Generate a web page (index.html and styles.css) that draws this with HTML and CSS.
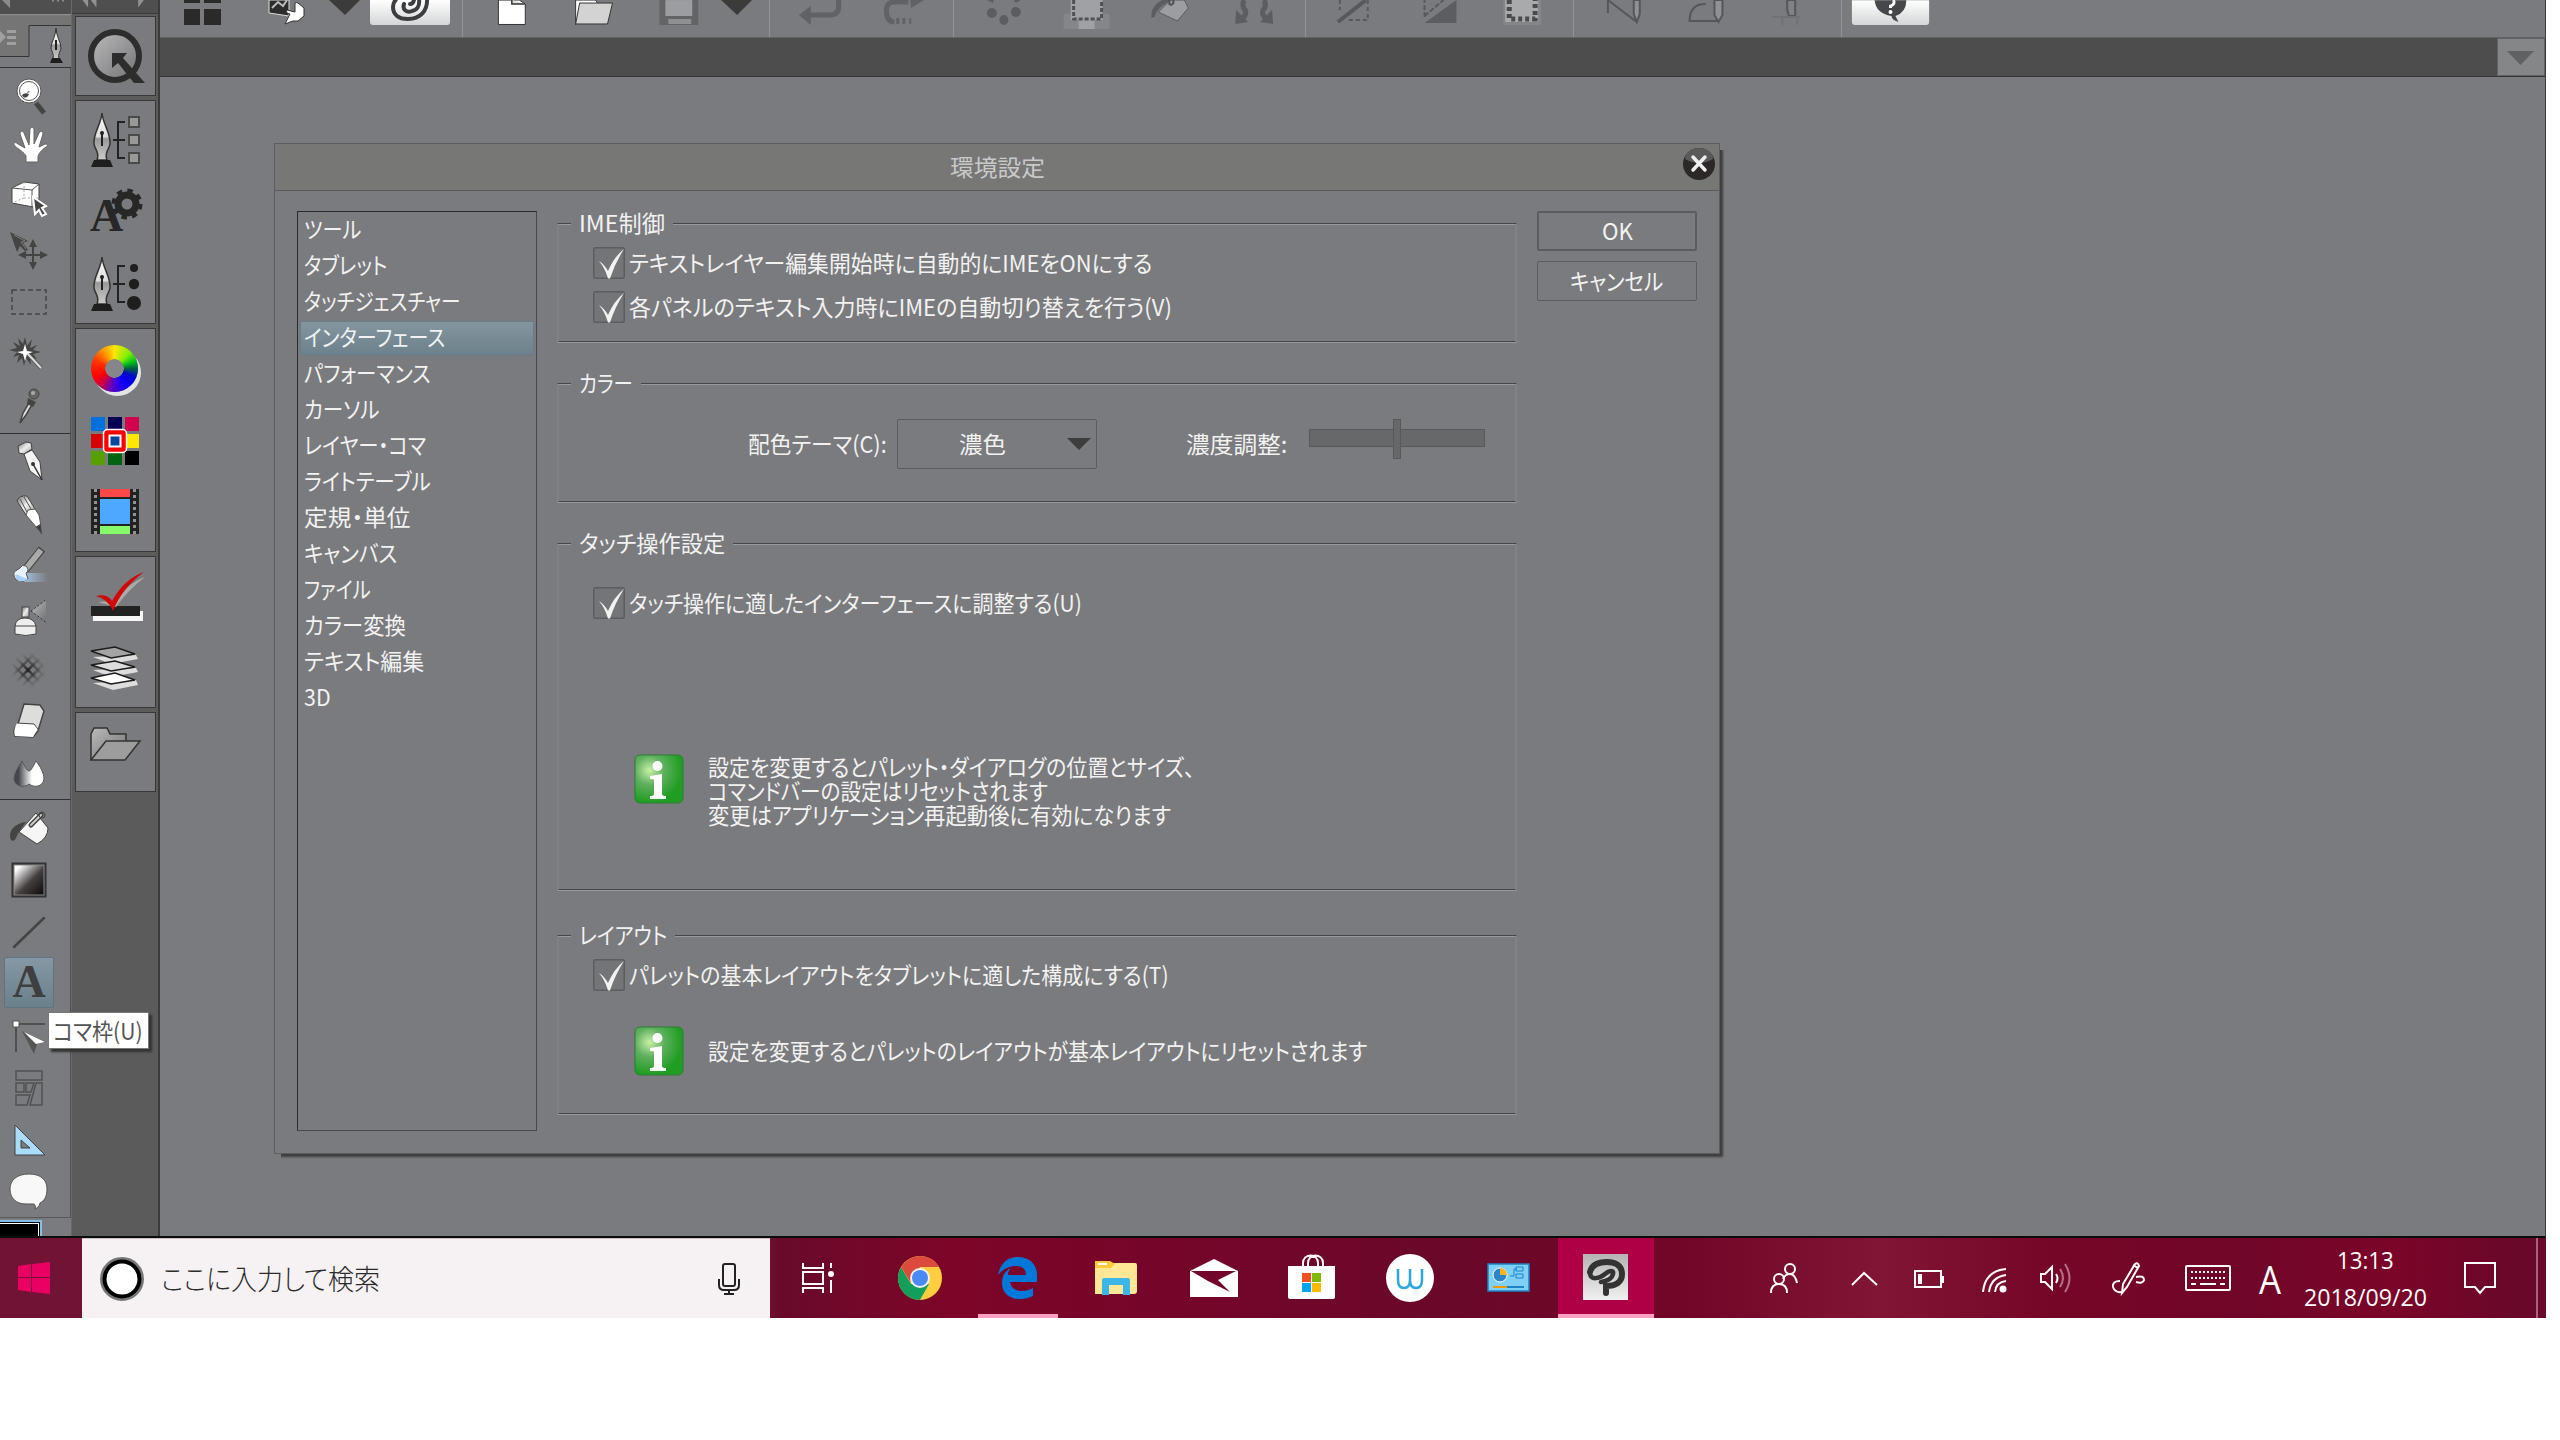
FILE: index.html
```html
<!DOCTYPE html>
<html lang="ja">
<head>
  <meta charset="UTF-8" />
  <title>環境設定</title>
  <link rel="stylesheet" href="styles.css">
</head>
<body>
<svg class="defs">
  <defs>
    <linearGradient id="metal" x1="0" y1="0" x2="1" y2="1"><stop offset="0" stop-color="#777"/><stop offset=".5" stop-color="#eee"/><stop offset="1" stop-color="#999"/></linearGradient>
    <linearGradient id="nib" x1="0" y1="0" x2="0" y2="1"><stop offset="0" stop-color="#fff"/><stop offset=".5" stop-color="#ddd"/><stop offset=".55" stop-color="#999"/><stop offset="1" stop-color="#ccc"/></linearGradient>
    <linearGradient id="grayfade" x1="0" y1="0" x2="1" y2="1"><stop offset="0" stop-color="#bbb"/><stop offset="1" stop-color="#717275"/></linearGradient>
    <linearGradient id="bw" x1="0" y1="0" x2="1" y2="1"><stop offset=".1" stop-color="#fff"/><stop offset=".55" stop-color="#433f3e"/><stop offset="1" stop-color="#0f0a08"/></linearGradient>
    <linearGradient id="drop" x1="0" y1="0" x2="1" y2="0"><stop offset=".15" stop-color="#42474c"/><stop offset=".6" stop-color="#fff"/></linearGradient>
    <linearGradient id="water" x1="0" y1="0" x2="1" y2="0"><stop offset="0" stop-color="#a9d0f5"/><stop offset="1" stop-color="#a9d0f5" stop-opacity="0"/></linearGradient>
    <linearGradient id="btnface" x1="0" y1="0" x2="0" y2="1"><stop offset="0" stop-color="#fff"/><stop offset="1" stop-color="#d3d6d7"/></linearGradient>
    <linearGradient id="appface" x1="0" y1="0" x2="0" y2="1"><stop offset="0" stop-color="#b4b4b4"/><stop offset="1" stop-color="#f0f0f0"/></linearGradient>
    <radialGradient id="green" cx=".3" cy=".32" r=".75"><stop offset="0" stop-color="#c8f0a8"/><stop offset=".4" stop-color="#5fb05f"/><stop offset=".9" stop-color="#1f9e22"/></radialGradient>
    <radialGradient id="mesh" gradientUnits="userSpaceOnUse" cx="28" cy="669" r="18"><stop offset="0" stop-color="#222"/><stop offset="1" stop-color="#555" stop-opacity="0"/></radialGradient>
    <g id="bignib">
      <path d="M102 113c-1 12-9 20-8 31 1 6 6 8 3 16h10c-3-8 2-10 3-16 1-11-7-19-8-31z" fill="url(#nib)" stroke="#333" stroke-width="1.5"/>
      <path d="M102 133v13" stroke="#222" stroke-width="2"/><circle cx="102" cy="133" r="2" fill="#222"/>
      <path d="M94 160h16l3 7H91z" fill="#1e1e1e"/>
      <path d="M125 122h-7v36h7M113 140h12" fill="none" stroke="#222" stroke-width="2"/>
    </g>
    <g id="check">
      <rect x=".75" y=".75" width="30.5" height="30.5" rx="1.5" fill="#747578" stroke="#5c5d5f" stroke-width="1.5"/>
      <path d="M6 14q5 3 9 10Q21 10 31 2 22 16 17 31.500h-2Q12 21 6 14z" fill="#f2f2f2"/>
    </g>
    <g id="info">
      <rect x="1" y="1" width="48" height="48" rx="5" fill="url(#green)" stroke="#2f7d35"/>
      <circle cx="23.500" cy="12" r="5" fill="#fff"/>
      <path d="M16 22l12-2v20q0 2 4 2v3H16v-3q4 0 4-2V26q0-1-4-1z" fill="#fff"/>
    </g>
  </defs>
</svg>

<div class="screen">
  <div class="app">
    <!-- tool palette -->
    <div class="tools">
      <div class="tools-top">
        <svg viewBox="0 0 71 68" width="71" height="68">
          <rect width="71" height="14" fill="#4f4f50"/>
          <path d="M2 0l8 8V0z" fill="#8b8b8d"/>
          <path d="M52 0h2M57 0h2M62 0h2" stroke="#8b8b8d" stroke-width="3"/>
          <path d="M0 14.500h71" stroke="#8c8d8f"/>
          <path d="M0 16h71v9H29v31H0z" fill="#757575"/>
          <path d="M0 56.500h29V25.500h42" fill="none" stroke="#353535"/>
          <path d="M0 31l6 6-6 6z" fill="#a0a0a0"/><path d="M7 31.500h9M7 37.500h9M7 43.500h9" stroke="#a0a0a0" stroke-width="3"/>
          <path d="M56 28c0 8-5 14-5 20 1 5 3 5 2 11h6c-1-6 1-6 2-11 0-6-5-12-5-20z" fill="url(#nib)" stroke="#333"/>
          <path d="M56 40v10" stroke="#222" stroke-width="2"/><path d="M50 63l2-5h8l3 5z" fill="#1e1e1e"/>
          <path d="M0 67.500h71" stroke="#343435"/>
        </svg>
      </div>
      <div class="toolset">
        <svg class="tool" viewBox="0 68 72 52"><path d="M36 103l8 10" stroke="#444" stroke-width="5"/><circle cx="29" cy="91" r="12" fill="#fff" stroke="#555"/><circle cx="29" cy="91" r="9.500" fill="none" stroke="#555"/><path d="M22 95q3-3 7-1-2 5-6 3zM27 93q1-3 3-1z" fill="#444"/></svg>
        <svg class="tool" viewBox="0 120 72 52"><path d="M26 162v-6c-2-4-7-6-12-11-1-3 2-3 4-1l7 4-5-14c0-3 3-4 4-1l5 12 1-16c1-2 3-2 4 0v15l5-11c2-3 4-1 4 1l-4 13 6-3c3 0 3 2 1 3-5 3-7 7-8 9v6z" fill="#fff" stroke="#666"/></svg>
        <svg class="tool" viewBox="0 172 72 52"><path d="M12 188l12-6 15 2v15l-6 8-21-4z" fill="#fff" stroke="#444"/><path d="M12 188l20 2v17M32 190l7-6" fill="none" stroke="#555"/><path d="M24 182v16l-12 5M24 198h14" fill="none" stroke="#aaa" stroke-dasharray="2 2"/><path d="M33 197l13 9-4 2 4 6-4 2-3-6-4 4z" fill="#444" stroke="#fff" stroke-width="2"/></svg>
        <svg class="tool" viewBox="0 224 72 52"><path d="M10 232l18 9-5 2 5 7-3 1-5-5-3 6z" fill="#444"/><path d="M14 235l11 6-4 1 5 7" stroke="#7a7b7e" fill="none"/><path d="M33 245v20M23 255h20" stroke="#444" stroke-width="2"/><path d="M33 239l4 8h-8zM33 270l4-8h-8zM18 255l8-4v8zM48 255l-8-4v8z" fill="#444"/></svg>
        <svg class="tool" viewBox="0 276 72 52"><rect x="12" y="290" width="34" height="24" fill="none" stroke="#454545" stroke-width="1.500" stroke-dasharray="5 3"/></svg>
        <svg class="tool" viewBox="0 328 72 52"><path d="M25 337l2 9 5-7-2 9 7-3-4 5 8 2-8 2 4 5-7-3 1 9-5-7-2 8-2-8-5 5 2-8-6 2 4-5-8-2 8-2-4-6 7 4-2-8 5 6z" fill="#454545"/><path d="M27 353l14 15" stroke="#555" stroke-width="4"/><path d="M27 353l14 15" stroke="#ddd" stroke-width="2"/><path d="M25 344l2 7 6 1-6 2-2 7-2-7-6-2 6-1z" fill="#fff"/></svg>
        <svg class="tool" viewBox="0 380 72 52"><path d="M20 423l3-10 7-12 3 2-7 12z" fill="#ddd" stroke="#444" stroke-width="1.500"/><path d="M28 398l8 4-3 5-6-3z" fill="#444"/><circle cx="34" cy="394" r="5" fill="#666" stroke="#444"/><circle cx="33" cy="393" r="2" fill="#aaa"/></svg>
      </div>
      <div class="toolset">
        <svg class="tool" viewBox="0 433 72 52"><path d="M18 445l8-4 5 1 1 6-8 5-5-1z" fill="url(#metal)" stroke="#444"/><path d="M24 453l8-4 8 12 2 18-12-9z" fill="#f4f4f4" stroke="#444"/><path d="M42 479l-9-16" stroke="#333" stroke-width="1.500"/><circle cx="33" cy="463" r="2" fill="#333"/></svg>
        <svg class="tool" viewBox="0 485 72 52"><path d="M17 500q2-6 10-5l8 13-9 6z" fill="url(#metal)" stroke="#444"/><path d="M26 514l2-5 7-1 4 6 2 11-4 2z" fill="#fff" stroke="#555"/><path d="M20 498l7 13M24 496l7 12" stroke="#555"/><path d="M41 531l-4-5 3-2z" fill="#333" stroke="#444" stroke-width="1.500"/></svg>
        <svg class="tool" viewBox="0 537 72 52"><path d="M22 572h26v9H18z" fill="url(#water)"/><path d="M25 569l17-21" stroke="#444" stroke-width="8"/><path d="M25 569l16-20" stroke="#aaa" stroke-width="6"/><path d="M20 567q2-4 6-2 4 4 0 7l2 6q-4 4-10 2-5-3-4-9z" fill="#e7f3ff" stroke="#555"/><path d="M15 574q3-1 5 1l8 3q-4 4-11 1z" fill="#a9d0f5"/></svg>
        <svg class="tool" viewBox="0 589 72 52"><path d="M31 610l15-11v22z" fill="url(#grayfade)"/><path d="M31 610l16-12M31 610l16 12" stroke="#333" stroke-dasharray="2 2"/><rect x="22" y="606" width="7" height="10" fill="url(#metal)" stroke="#444"/><path d="M15 625q1-8 10-8 9 0 11 8v8q-10 3-21 0z" fill="#eee" stroke="#444"/><path d="M15 625h21" stroke="#444"/></svg>
        <svg class="tool" viewBox="0 641 72 52"><g stroke="url(#mesh)" stroke-width="2.500"><path d="M12 663l22 22M14 655l28 28M21 652l24 24M28 650l18 18"/><path d="M12 675l22-22M14 683l28-28M21 686l24-24M28 688l18-18"/></g></svg>
        <svg class="tool" viewBox="0 693 72 52"><path d="M24 703l16 1 4 6-6 20-5 6-18-1q-3-6 3-12z" fill="#ddd" stroke="#444" stroke-width="1.500"/><path d="M17 722l17 1 4 4-5 9-18-1q-2-6 2-13z" fill="#fff"/><path d="M17 722l17 1 4 5" fill="none" stroke="#444"/></svg>
        <svg class="tool" viewBox="0 745 72 52"><path d="M22 760q-8 12-8 18c1 8 11 9 15 5 5 4 14 3 15-5 0-6-4-13-8-18-2 4-5 10-7 10s-5-6-7-10z" fill="url(#drop)" stroke="#555"/></svg>
      </div>
      <div class="toolset last">
        <svg class="tool" viewBox="0 801 72 52"><path d="M19 832l17-19 12 15q0 10-11 16z" fill="#f6f6f6" stroke="#444"/><path d="M25 822q-14 3-15 13 0 8 5 5 3-8 11-18z" fill="#444"/><path d="M31 825l10-10" stroke="#444" stroke-width="5" stroke-linecap="round"/><path d="M31 825l10-10" stroke="#ccc" stroke-width="2" stroke-linecap="round"/><circle cx="42" cy="815" r="3" fill="none" stroke="#444"/></svg>
        <svg class="tool" viewBox="0 853 72 52"><rect x="12.500" y="863.500" width="33" height="33" fill="#888" stroke="#333" stroke-width="2"/><rect x="14.500" y="865.500" width="29" height="29" fill="url(#bw)"/></svg>
        <svg class="tool" viewBox="0 905 72 52"><path d="M14 947l30-29" stroke="#444" stroke-width="2.500" stroke-linecap="round"/></svg>
        <div class="tool"><div class="picked">A</div></div>
        <svg class="tool" viewBox="0 1009 72 52"><path d="M16 1024h29M16 1024v28" stroke="#505050" stroke-width="2"/><rect x="13" y="1021" width="6" height="6" fill="#fff" stroke="#555"/><path d="M22 1031l24 11-9 2-3 10z" fill="#555"/><path d="M24 1032l21 10-9 2z" fill="#fff"/></svg>
        <svg class="tool" viewBox="0 1061 72 52"><g fill="none" stroke="#505153" stroke-width="1.500"><path d="M16 1071h26v9H16zM16 1083h8v9h-8zM26 1083h8l-3 9h-5zM16 1095h14l-3 10H16zM36 1083h6v22H30z"/></g></svg>
        <svg class="tool" viewBox="0 1113 72 52"><path d="M15 1125v30h30zM21 1140l9 8h-9z" fill="#a8dcfa" fill-rule="evenodd" stroke="#444"/></svg>
        <svg class="tool" viewBox="0 1165 72 52"><path d="M29 1174c12 0 18 6 18 15 0 8-3 12-7 14 0 3-3 5-5 6 1-3 0-4-1-5h-8c-10 0-16-6-16-15s7-15 19-15z" fill="#f8f8f8" stroke="#555"/></svg>
      </div>
      <div class="swatch"></div>
    </div>

    <!-- palette dock -->
    <div class="dock">
      <svg class="dock-top" viewBox="72 0 86 14" width="86" height="14"><path d="M80 0h6v8zM89 0h6v8zM140 0h6l-6 8z" fill="#929294"/></svg>
      <div class="dockbox">
        <svg viewBox="76 17 79 79" width="79" height="79"><circle cx="115" cy="56" r="24" fill="url(#grayfade)" stroke="#2d2d2e" stroke-width="6"/><path d="M112 53h15l-4 5 22 25h-11l-16-20-6 5z" fill="#2d2d2e"/></svg>
      </div>
      <div class="dockbox">
        <svg viewBox="76 101 79 76" width="79" height="76"><use href="#bignib"/><g fill="#999" stroke="#4a4a4a" stroke-width="2"><path d="M129 117h10v10h-10zM129 135h10v10h-10zM129 153h10v10h-10z"/></g></svg>
        <svg viewBox="76 177 79 70" width="79" height="70"><text x="90" y="231" class="glyph-a">A</text><circle cx="127" cy="204" r="9" fill="none" stroke="#272727" stroke-width="7"/><circle cx="127" cy="204" r="13" fill="none" stroke="#272727" stroke-width="5" stroke-dasharray="5.200 5"/></svg>
        <svg viewBox="76 247 79 76" width="79" height="76"><g transform="translate(0 144)"><use href="#bignib"/></g><circle cx="134" cy="268" r="4" fill="#1e1e1e"/><circle cx="134" cy="284" r="5.200" fill="#1e1e1e"/><circle cx="134" cy="303" r="7" fill="#1e1e1e"/></svg>
      </div>
      <div class="dockbox">
        <div class="wheel-cell"><div class="wheel"></div></div>
        <svg viewBox="76 405 79 72" width="79" height="72">
          <path d="M91 417h14v14H91z" fill="#0070df"/><path d="M108 417h14v14h-14z" fill="#000055"/><path d="M125 417h14v14h-14z" fill="#d4004c"/>
          <path d="M91 434h14v14H91z" fill="#d90000"/><path d="M125 434h14v14h-14z" fill="#ffe800"/>
          <path d="M91 451h14v14H91z" fill="#57a000"/><path d="M108 451h14v14h-14z" fill="#006410"/><path d="M125 451h14v14h-14z" fill="#000"/>
          <rect x="103.500" y="429.500" width="23" height="23" rx="4" fill="#f00" stroke="#fff" stroke-width="1.500"/><rect x="109.500" y="435.500" width="11" height="11" fill="#0a48a0" stroke="#fff" stroke-width="2"/>
        </svg>
        <svg viewBox="76 477 79 74" width="79" height="74"><path d="M91 489h48v45H91z" fill="#222"/><path d="M100 489h30v8h-30z" fill="#ff4747"/><path d="M100 499h30v25h-30z" fill="#4fa8ff"/><path d="M100 526h30v8h-30z" fill="#86fa6a"/><path d="M95.500 489v45M134.500 489v45" stroke="#929294" stroke-width="3" stroke-dasharray="3"/></svg>
      </div>
      <div class="dockbox">
        <svg viewBox="76 557 79 76" width="79" height="76"><path d="M93 611h50v10H93z" fill="#f6f6f6"/><path d="M91 606h49v10H91z" fill="#222"/><path d="M98 602q12-2 15 4 12-22 32-29-17 13-29 30z" fill="#aaa"/><path d="M96 596q11-3 16 5 12-22 32-29-22 16-31 39-5-12-17-15z" fill="#d20808"/></svg>
        <svg viewBox="76 633 79 74" width="79" height="74"><path d="M93 657l18 7 27-5-2-4zM93 670l18 7 27-5-2-4zM93 683l20 7 25-5-2-5z" fill="#ddd"/><g stroke="#1c1c1c" stroke-width="1.500"><path d="M91 651l24-4 20 7-24 4z" fill="#a4a4a4"/><path d="M91 665l24-4 20 6-24 4z" fill="#ddd"/><path d="M91 678l24-5 20 7-24 4z" fill="#fff"/></g></svg>
      </div>
      <div class="dockbox">
        <svg viewBox="76 713 79 79" width="79" height="79"><path d="M91 760v-26l3-6h13l3 6h16v8" fill="url(#grayfade)" stroke="#333" stroke-width="1.500"/><path d="M91 760l15-19h34l-15 19z" fill="#9d9d9d" stroke="#333" stroke-width="1.500"/></svg>
      </div>
    </div>

    <div class="main">
      <!-- command bar -->
      <div class="cmdbar">
        <svg viewBox="160 0 302 37" width="302" height="37">
          <path d="M184 0h16v3h-16zM204 0h17v3h-17zM184 9h16v16h-16zM204 9h17v16h-17z" fill="#2a2a2a"/>
          <path d="M269 0v13l20 3V0z" fill="#2c2c2c" stroke="#ddd"/><path d="M272 8l6-6 5 4 4-6" stroke="#bbb" fill="none" stroke-width="2"/>
          <path d="M285 24l5-10q-5-1-3-4l8 2V3q2-1 3 0l6 5v8l-6 5h-5z" fill="#fff" stroke="#333"/>
          <path d="M329 0h31l-15 15z" fill="#3b3b3c"/>
          <path d="M370 0h80v22q0 3-3 3h-74q-3 0-3-3z" fill="url(#btnface)"/>
          <path d="M427-2c1 13-7 21-19 21-10 0-15-5-15-12 0-4 2-7 5-10M404 4c-2 6 3 9 8 7 5-1 8-5 7-12M410 4q3 0 4-4" fill="none" stroke="#3d3e42" stroke-width="4" stroke-linecap="round"/>
        </svg>
        <svg viewBox="462 0 307 37" width="307" height="37">
          <path d="M497.500 0v24.500h27V4l-6-4z" fill="#fff" stroke="#333"/><path d="M511 0v4h13" stroke="#333" fill="#ddd" stroke-width="1.500"/>
          <path d="M575 25V0h20l2 3" fill="#fff" stroke="#333"/><path d="M579 3h33l-5 21h-32z" fill="#d3d3d4" stroke="#333"/>
          <path d="M659 0h39v25h-39z" fill="#636466"/><path d="M665 0h27v16h-27z" fill="#9c9da0"/><path d="M668 19h23v5h-23z" fill="#8f9092"/>
          <path d="M721 0h31l-15 15z" fill="#3b3b3c"/>
        </svg>
        <svg viewBox="769 0 184 37" width="184" height="37" fill="none" stroke="#616265">
          <path d="M838 0v7q0 8-9 8h-20" stroke-width="5"/><path d="M798 15l12-9v19z" fill="#616265" stroke="none"/>
          <path d="M908 2h-14q-8 0-8 8 0 12 8 12" stroke-width="5"/><path d="M910 0h14l-13 8zM896 18h3v6h-3zM902 18h3v6h-3zM909 18h2v6h-2z" fill="#616265" stroke="none"/>
        </svg>
        <svg viewBox="953 0 352 37" width="352" height="37" fill="#5c5d60">
          <ellipse cx="991" cy="13" rx="5" ry="5"/><ellipse cx="1003" cy="20" rx="4.500" ry="5"/><ellipse cx="1015" cy="12" rx="5" ry="5"/><path d="M986 0h7l-1 3zM1013 0h7l-5 3z"/>
          <path d="M1063 14h46v15h-46z" fill="#858689"/><path d="M1070 0h32v20h-32zM1078 20h16v9h-16z" fill="#a0a1a4"/><path d="M1073 0v19h28V0" fill="none" stroke="#505154" stroke-width="3" stroke-dasharray="4 2"/>
          <path d="M1158 12l12-12h14l4 8-11 13z" fill="#9c9da0" stroke="#5c5d60"/><path d="M1151 18q-1-12 11-18h10q-15 6-18 17z"/><path d="M1169 0v4q2 2 4-1V0" fill="none" stroke="#505154" stroke-width="2"/>
          <path d="M1244 0q-3 6 1 10 2 4-3 9M1264 0q3 6-1 10-2 4 3 9" fill="none" stroke="#5c5d60" stroke-width="5"/><path d="M1235 24l1-14 12 12zM1273 24l-1-14-12 12z"/>
        </svg>
        <svg viewBox="1305 0 268 37" width="268" height="37" fill="none" stroke="#58595c" stroke-width="2">
          <path d="M1337 22l28-22" stroke-width="4"/><path d="M1339 0v10M1367 0v20h-19" stroke-dasharray="4 3"/>
          <path d="M1424 23l32-23v23z" fill="#5c5d60" stroke="none"/><path d="M1424 17V0M1424 16l19-16" stroke-dasharray="5 2"/>
          <path d="M1503 0h38v25h-38z" fill="#85868a" stroke="none"/><path d="M1505 0h33v22h-33z" fill="#a9aaac" stroke="none"/><path d="M1509 0v19h26V0" stroke-width="5" stroke="#4a4b4d" stroke-dasharray="4 3"/>
        </svg>
        <svg viewBox="1573 0 268 37" width="268" height="37" fill="none" stroke="#55565a" stroke-width="2">
          <path d="M1607 13V0l29 22"/><path d="M1633 0v14l3 8 3-8V0z" fill="#909194"/>
          <path d="M1717 21h-28q0-17 16-17"/><path d="M1714 0v15l4 7 4-7V0z" fill="#909194"/>
          <path d="M1787 0v10l2 6h6V0z" fill="#808184"/><path d="M1772 17h28M1782 18v7M1797 18v7" stroke="#707174"/>
        </svg>
        <svg viewBox="1841 0 100 37" width="100" height="37">
          <path d="M1851 0h78v22q0 3-3 3h-72q-3 0-3-3z" fill="url(#btnface)"/>
          <path d="M1874 0h32q0 12-11 16l3 6q-7-2-7-6-16-3-17-16z" fill="#46474a"/><path d="M1893 0q2 4-3 6v2" stroke="#fff" stroke-width="3" fill="none"/><circle cx="1890" cy="12" r="2" fill="#fff"/>
        </svg>
      </div>
      <div class="tabbar"><div class="tabmenu"><svg viewBox="0 0 48 38" width="48" height="38"><path d="M9 12h27L22.500 26z" fill="#606163"/></svg></div></div>

      <div class="canvas">
        <div class="dialog">
          <div class="titlebar"><span class="fit" data-w="95">環境設定</span></div>
          <svg class="close" viewBox="0 0 34 34"><circle cx="17" cy="17" r="16" fill="#2b2827"/><path d="M3 12a14 11 0 0128 0q-14 8-28 0z" fill="#5b5a5a"/><path d="M11 10l12 13M23 10L11 23" stroke="#eee" stroke-width="3.500" stroke-linecap="round"/></svg>
          <div class="dialog-body">
            <ul class="cats">
              <li><span class="fit" data-w="57">ツール</span></li>
              <li><span class="fit" data-w="83">タブレット</span></li>
              <li><span class="fit" data-w="156">タッチジェスチャー</span></li>
              <li class="on"><span class="fit" data-w="141">インターフェース</span></li>
              <li><span class="fit" data-w="127">パフォーマンス</span></li>
              <li><span class="fit" data-w="75">カーソル</span></li>
              <li><span class="fit" data-w="122">レイヤー・コマ</span></li>
              <li><span class="fit" data-w="127">ライトテーブル</span></li>
              <li><span class="fit" data-w="107">定規・単位</span></li>
              <li><span class="fit" data-w="93">キャンバス</span></li>
              <li><span class="fit" data-w="67">ファイル</span></li>
              <li><span class="fit" data-w="102">カラー変換</span></li>
              <li><span class="fit" data-w="120">テキスト編集</span></li>
              <li><span class="fit" data-w="27">3D</span></li>
            </ul>

            <div class="groups">
              <fieldset class="g-ime">
                <legend><span class="fit" data-w="86">IME制御</span></legend>
                <div class="check"><svg viewBox="0 0 32 32"><use href="#check"/></svg><span class="fit" data-w="523">テキストレイヤー編集開始時に自動的にIMEをONにする</span></div>
                <div class="check"><svg viewBox="0 0 32 32"><use href="#check"/></svg><span class="fit" data-w="543">各パネルのテキスト入力時にIMEの自動切り替えを行う(V)</span></div>
              </fieldset>
              <fieldset class="g-color">
                <legend><span class="fit" data-w="54">カラー</span></legend>
                <div class="color-row">
                  <span class="fit" data-w="139">配色テーマ(C):</span>
                  <div class="select"><span class="fit" data-w="47">濃色</span><svg viewBox="0 0 24 12" width="24" height="12"><path d="M0 0h24L12 12z" fill="#3d3d3e"/></svg></div>
                  <span class="fit density" data-w="101">濃度調整:</span>
                  <div class="slider"><div class="thumb"></div></div>
                </div>
              </fieldset>
              <fieldset class="g-touch">
                <legend><span class="fit" data-w="146">タッチ操作設定</span></legend>
                <div class="check"><svg viewBox="0 0 32 32"><use href="#check"/></svg><span class="fit" data-w="453">タッチ操作に適したインターフェースに調整する(U)</span></div>
                <div class="note">
                  <svg viewBox="0 0 50 50"><use href="#info"/></svg>
                  <div class="lines">
                    <div><span class="fit" data-w="487">設定を変更するとパレット・ダイアログの位置とサイズ、</span></div>
                    <div><span class="fit" data-w="340">コマンドバーの設定はリセットされます</span></div>
                    <div><span class="fit" data-w="463">変更はアプリケーション再起動後に有効になります</span></div>
                  </div>
                </div>
              </fieldset>
              <fieldset class="g-layout">
                <legend><span class="fit" data-w="88">レイアウト</span></legend>
                <div class="check"><svg viewBox="0 0 32 32"><use href="#check"/></svg><span class="fit" data-w="540">パレットの基本レイアウトをタブレットに適した構成にする(T)</span></div>
                <div class="note">
                  <svg viewBox="0 0 50 50"><use href="#info"/></svg>
                  <div class="lines"><div><span class="fit" data-w="659">設定を変更するとパレットのレイアウトが基本レイアウトにリセットされます</span></div></div>
                </div>
              </fieldset>
            </div>

            <div class="buttons">
              <button class="default"><span class="fit" data-w="31">OK</span></button>
              <button><span class="fit" data-w="93">キャンセル</span></button>
            </div>
          </div>
        </div>
      </div>
    </div>
    <div class="tooltip"><span class="fit" data-w="90">コマ枠(U)</span></div>
  </div>

  <!-- taskbar -->
  <div class="taskbar">
    <svg class="start" viewBox="0 1238 82 80" width="82" height="80"><path d="M18 1266l13-2v13H18zM32 1264l18-2v15H32zM18 1278h13v14l-13-2zM32 1278h18v16l-18-2z" fill="#ea0062"/></svg>
    <div class="search">
      <svg viewBox="0 0 44 44" width="44" height="44"><circle cx="22" cy="22" r="20.500" fill="#fff" stroke="#777" stroke-width="3"/><circle cx="22" cy="22" r="17.500" fill="none" stroke="#000" stroke-width="4"/></svg>
      <span class="fit" data-w="219">ここに入力して検索</span>
      <svg class="mic" viewBox="0 0 22 32" width="22" height="32"><rect x="5" y="1" width="12" height="22" rx="2" fill="none" stroke="#222" stroke-width="2"/><path d="M1 16v6q0 5 5 5h10q5 0 5-5v-6M11 27v4M6 31h10" fill="none" stroke="#222" stroke-width="2"/></svg>
    </div>
    <svg viewBox="770 1238 100 80" width="100" height="80"><path d="M803 1263v5h20v-5M803 1272h20v12h-20zM803 1293v-5h20v5M831 1263v5M831 1280v13" fill="none" stroke="#fff" stroke-width="2"/><circle cx="831" cy="1274" r="3" fill="#fff"/></svg>
    <svg viewBox="870 1238 98 80" width="98" height="80">
      <circle cx="920" cy="1278" r="22" fill="#ffcd40"/>
      <path d="M901 1267a22 22 0 0019 33l9-16-18 0z" fill="#119f5b"/><path d="M901 1267q8-11 19-11 13 0 19 11h-19l-9 16z" fill="#db4a3c"/>
      <circle cx="920" cy="1278" r="10" fill="#f2f2f2"/><circle cx="920" cy="1278" r="8" fill="#4a8af5"/>
    </svg>
    <svg viewBox="968 1238 98 80" width="98" height="80"><path d="M998 1275c2-11 9-18 20-18 12 0 19 8 19 18v7h-27c1 7 7 9 12 9 4 0 8-1 11-3v8c-4 2-8 3-13 3-12 0-18-7-18-16 0-7 3-12 9-15-2 2-3 4-3 7h18c0-5-3-9-10-9-8 0-14 4-18 9z" fill="#0078d9"/><path d="M978 1314h80v4h-80z" fill="#f89fc3"/></svg>
    <svg viewBox="1066 1238 98 80" width="98" height="80"><path d="M1095 1263h40q2 0 2 2v26q0 3-3 3h-39z" fill="#ffe796"/><path d="M1095 1261h15l5 3-4 4h-16z" fill="#ffcb38"/><path d="M1098 1264h9" stroke="#fff" stroke-width="2"/><path d="M1102 1295v-15q0-2 2-2h24q2 0 2 2v15h-7v-10h-14v10z" fill="#3bb6e8"/></svg>
    <svg viewBox="1164 1238 98 80" width="98" height="80"><path d="M1190 1271l24-12 24 12v26h-48z" fill="#fff"/><path d="M1191 1271h45l-18 9 12 12-22-11z" fill="#72052a"/></svg>
    <svg viewBox="1262 1238 98 80" width="98" height="80"><path d="M1303 1266v-3c0-10 15-10 15 0v3M1308 1266v-3c0-10 15-10 15 0v3" fill="none" stroke="#fff" stroke-width="2"/><path d="M1288 1266h47v31q0 2-2 2h-43q-2 0-2-2z" fill="#fff"/><path d="M1302 1273h9v9h-9z" fill="#f25022"/><path d="M1312 1273h9v9h-9z" fill="#7fba00"/><path d="M1302 1283h9v9h-9z" fill="#00a4ef"/><path d="M1312 1283h9v9h-9z" fill="#ffb900"/></svg>
    <svg viewBox="1360 1238 98 80" width="98" height="80"><circle cx="1410" cy="1278" r="24" fill="#fff"/><path d="M1398 1269v11q0 8 6 8t6-8v-11 11q0 8 6 8t6-8v-11" fill="none" stroke="#2ca7df" stroke-width="2.500"/></svg>
    <svg viewBox="1458 1238 98 80" width="98" height="80"><rect x="1488" y="1264" width="41" height="27" fill="#7fd0f7" stroke="#1c84c4" stroke-width="1.500"/><circle cx="1500" cy="1275" r="7" fill="#2a86c8" stroke="#fff"/><path d="M1500 1275v-7a7 7 0 017 7z" fill="#ffb21e"/><path d="M1516 1267h7v4h-7zM1516 1274h7v4h-7zM1510 1276h4v-7h3" fill="none" stroke="#1c84c4"/><path d="M1493 1287h14" stroke="#f5960a" stroke-width="2"/><path d="M1507 1287h17" stroke="#1c84c4" stroke-width="2"/></svg>
    <div class="running">
      <svg viewBox="0 0 45 46" width="45" height="46"><rect width="45" height="46" fill="url(#appface)"/><path d="M7 18c2-8 9-10 17-10 10 0 15 5 15 12 0 8-6 12-16 12v7" fill="none" stroke="#333" stroke-width="6" stroke-linecap="round"/><path d="M7 20c1 6 9 5 15 0 5-4 9-4 8 0-1 5-6 7-12 8" fill="none" stroke="#333" stroke-width="4.500" stroke-linecap="round"/></svg>
    </div>
    <div class="tray">
      <svg viewBox="1745 1238 82 80" width="82" height="80" fill="none" stroke="#fff" stroke-width="2"><circle cx="1790" cy="1269" r="5"/><path d="M1783 1279q2-5 7-5t7 9"/><circle cx="1779" cy="1279" r="5"/><path d="M1771 1293q0-9 8-9t8 9"/></svg>
      <svg viewBox="1827 1238 70 80" width="70" height="80"><path d="M1852 1285l12-12 13 12" fill="none" stroke="#fff" stroke-width="2"/></svg>
      <svg viewBox="1897 1238 64 80" width="64" height="80"><path d="M1915 1271h26v16h-26zM1943 1276v7" fill="none" stroke="#fff" stroke-width="2"/><path d="M1918 1274h4v10h-4z" fill="#fff"/></svg>
      <svg viewBox="1961 1238 64 80" width="64" height="80" fill="none" stroke="#fff" stroke-width="2"><path d="M1983 1292q2-21 23-23M1989 1292q2-15 17-17M1995 1292q1-10 11-11"/><circle cx="2003" cy="1289" r="2.500" fill="#fff"/></svg>
      <svg viewBox="2025 1238 70 80" width="70" height="80" fill="none" stroke="#fff" stroke-width="2"><path d="M2041 1274h4l7-7v22l-7-7h-4zM2056 1274q3 4 0 9"/><path d="M2060 1269q6 9 0 18M2065 1264q9 14 0 28" stroke="#b3708a"/></svg>
      <svg viewBox="2095 1238 70 80" width="70" height="80" fill="none" stroke="#fff" stroke-width="2"><path d="M2122 1293l1-9 12-20q3-2 4 2l-12 21zM2133 1265l5 3"/><path d="M2120 1281q-8 0-7 6 2 6 9 5M2136 1277q8-2 8 3-1 4-8 2"/></svg>
      <svg viewBox="2165 1238 84 80" width="84" height="80" fill="none" stroke="#fff" stroke-width="2"><rect x="2186" y="1266" width="44" height="24" rx="1"/><path d="M2191 1272h34M2191 1278h34" stroke-dasharray="2 2"/><path d="M2191 1284h5M2200 1284h16M2220 1284h5"/></svg>
      <svg viewBox="2249 1238 42 80" width="42" height="80"><text x="2270" y="1294" class="ime" textLength="22" lengthAdjust="spacingAndGlyphs">A</text></svg>
      <div class="clock"><span class="fit" data-w="57">13:13</span><span class="fit" data-w="123">2018/09/20</span></div>
      <svg viewBox="2440 1238 96 80" width="96" height="80"><path d="M2465 1263h30v24h-10l-5 6-5-6h-10z" fill="none" stroke="#fff" stroke-width="2"/></svg>
      <div class="peek"></div>
    </div>
  </div>
</div>
<script>
  document.querySelectorAll('.fit').forEach(el => {
    const w = Number(el.dataset.w);
    const natural = el.offsetWidth;
    el.style.transform = `scaleX(${w / natural})`;
    el.style.marginRight = `${w - natural}px`;
  });
</script>
</body>
</html>
```
FILE: styles.css
```css
* {
  box-sizing: border-box;
}
body {
  margin: 0;
  width: 2560px;
  height: 1440px;
  overflow: hidden;
  background: #fff;
  color: #f2f2f2;
  font-family: "Noto Sans CJK JP", sans-serif;
  font-size: 23px;
}
svg {
  display: block;
  flex: none;
}
.defs {
  position: absolute;
  width: 0;
  height: 0;
}
.fit {
  display: inline-block;
  flex: none;
  white-space: nowrap;
  transform-origin: 0 50%;
  font-feature-settings: "palt";
}
.screen {
  width: 2546px;
  height: 1318px;
}
.app {
  position: relative;
  display: flex;
  height: 1238px;
  background: #7a7b7e;
  border-right: 1px solid #3c3c3d;
  border-bottom: 2px solid #0c0c0c;
  overflow: hidden;
}

/* tool palette */
.tools {
  width: 72px;
  flex: none;
  border-right: 1px solid #69696b;
}
.toolset {
  width: 71px;
  border-right: 1px solid #505052;
  border-bottom: 1px solid #303031;
  height: 366px;
}
.toolset.last {
  height: 418px;
  padding-top: 1px;
  border-bottom-color: #58585a;
}
.tool {
  display: block;
  width: 72px;
  height: 52px;
}
.picked {
  width: 50px;
  height: 51px;
  margin-left: 4px;
  border: 1px solid #60747f;
  border-radius: 2px;
  background: linear-gradient(#8598a3, #6a808b);
  color: #3f3f40;
  font: bold 46px/48px "Liberation Serif", serif;
  text-align: center;
}
.swatch {
  width: 42px;
  height: 30px;
  margin-top: 2px;
  background: #000;
  border-top: 2px solid #84bfe8;
  border-right: 2px solid #84bfe8;
  box-shadow: inset -1px 1px #000, inset -2px 2px #fff;
}

/* palette dock */
.dock {
  width: 88px;
  flex: none;
  background: #5b5b5b;
  border-right: 2px solid #3b3b3c;
}
.dock-top {
  background: #4f4f50;
  border-bottom: 1px solid #3b3b3c;
  margin-bottom: 2px;
}
.dockbox {
  width: 81px;
  margin: 0 0 4px 3px;
  border: 1px solid #383839;
  background: #7a7b7e;
}
.dockbox:nth-child(2) { height: 80px; }
.dockbox:nth-child(3) { height: 224px; }
.dockbox:nth-child(4) { height: 224px; }
.dockbox:nth-child(5) { height: 152px; }
.dockbox:nth-child(6) { height: 80px; }
.glyph-a {
  font: bold 46px "Liberation Serif", serif;
  fill: #272727;
}
.wheel-cell {
  height: 76px;
  padding: 16px 0 0 15px;
}
.wheel {
  width: 47px;
  height: 47px;
  border-radius: 50%;
  background: radial-gradient(circle, #858689 9px, transparent 9.500px), conic-gradient(#ffe600, #7cf000 45deg, #00c020 70deg, #006040 90deg, #0000d0 115deg, #1000ff 150deg, #6000c0 190deg, #c00050 215deg, #f00 245deg, #ff3000 290deg, #ff9000 325deg, #ffe600);
  box-shadow: 3px 4px #e4e4e4;
}

/* command bar */
.main {
  width: 2385px;
}
.cmdbar {
  display: flex;
  height: 38px;
  border-bottom: 1px solid #636365;
}
.cmdbar svg + svg {
  border-left: 1px solid #929395;
}
.tabbar {
  display: flex;
  justify-content: flex-end;
  height: 39px;
  background: #4d4d4d;
  border-bottom: 1px solid #353535;
}
.tabmenu {
  width: 48px;
  background: #858688;
  border: 1px solid #626264;
}
.canvas {
  height: 1159px;
  position: relative;
}

/* preferences window */
.dialog {
  position: absolute;
  left: 114px;
  top: 66px;
  width: 1446px;
  height: 1011px;
  background: #7a7b7e;
  border: 1px solid #5c5d5c;
  box-shadow: 3px 3px 2px #3e3e3f;
  clip-path: polygon(0 0, 1446px 0, 1446px 7px, 1452px 7px, 1452px 1017px, 7px 1017px, 7px 1011px, 0 1011px);
}
.titlebar {
  height: 47px;
  padding-left: 675px;
  background: #777776;
  border-bottom: 1px solid #5a5a5a;
  color: #c9c9c9;
  line-height: 45px;
}
.close {
  position: absolute;
  right: 3px;
  top: 3px;
  width: 34px;
  height: 34px;
}
.dialog-body {
  display: flex;
  padding: 20px 22px;
}
.cats {
  width: 240px;
  height: 920px;
  margin: 0;
  padding: 1px 2px;
  list-style: none;
  border: 1px solid #4a4a4b;
  border-top-color: #2b2b2c;
  border-left-color: #2b2b2c;
}
.cats li {
  height: 36px;
  padding-left: 4px;
  line-height: 31px;
}
.cats li.on {
  height: 34px;
  margin-bottom: 2px;
  background: linear-gradient(#84959e, #6d828c);
  border: 1px solid #687d87;
  padding-left: 3px;
  line-height: 29px;
}
.groups {
  width: 960px;
  margin-left: 20px;
  padding-top: 1px;
}
fieldset {
  margin: 0 0 29px;
  padding: 0;
  border: 2px groove #99999b;
  border-left: 2px solid #818285;
  border-right: 2px solid #818285;
  min-width: 0;
}
legend {
  height: 24px;
  margin-left: 12px;
  padding: 0 8px;
  line-height: 20px;
}
.g-ime, .g-color {
  height: 131px;
}
.g-touch {
  height: 359px;
  margin-bottom: 33px;
}
.g-layout {
  height: 191px;
}
.check {
  display: flex;
  margin: 11px 0 0 34px;
  height: 32px;
  line-height: 31px;
}
.check svg {
  width: 32px;
  height: 32px;
  margin-right: 4px;
}
.check + .check {
  margin-top: 12px;
}
.g-touch .check {
  margin-top: 31px;
}
.color-row {
  display: flex;
  padding: 23px 0 0 189px;
  line-height: 48px;
}
.select {
  display: flex;
  align-items: center;
  justify-content: space-between;
  width: 200px;
  height: 50px;
  margin-left: 10px;
  padding: 0 5px 0 61px;
  border: 1px solid #5b5c5e;
  border-radius: 2px;
  line-height: 46px;
}
.select .fit {
  margin-top: -2px;
}
.density {
  margin-left: 89px;
}
.slider {
  width: 176px;
  height: 18px;
  margin: 10px 0 0 22px;
  background: #67686a;
  border: 1px solid #58595b;
}
.thumb {
  width: 8px;
  height: 40px;
  margin: -11px 0 0 83px;
  background: #67686a;
  border: 1px solid #58595b;
}
.note {
  display: flex;
  align-items: center;
  margin: 35px 0 0 75px;
  height: 50px;
  line-height: 24px;
}
.g-touch .note {
  margin-top: 135px;
}
.note svg {
  width: 50px;
  height: 50px;
  margin-right: 24px;
}
.lines {
  margin-top: -2px;
}
.g-touch .lines {
  margin-top: 22px;
}
.buttons {
  width: 160px;
  margin-left: 20px;
}
button {
  display: flex;
  justify-content: center;
  align-items: center;
  width: 160px;
  height: 40px;
  margin-bottom: 10px;
  padding: 0 0 2px;
  background: none;
  border: 1px solid #5b5c5e;
  border-radius: 2px;
  color: inherit;
  font: inherit;
}
button.default {
  border-width: 2px;
}
.tooltip {
  position: absolute;
  left: 48px;
  top: 1012px;
  width: 101px;
  height: 37px;
  padding-left: 4px;
  background: #fff;
  border: 1px solid #777;
  box-shadow: 3px 3px 2px #333;
  color: #555;
  line-height: 34px;
}

/* taskbar */
.taskbar {
  display: flex;
  height: 80px;
  background: linear-gradient(90deg, #701334 0, #701334 760px, #690a2b 780px, #7d0528 950px, #72062a 1250px, #6a0829 1450px, #720628 1680px, #801535 1880px, #760627 2050px, #700629 2250px, #7b0528 2390px, #68082a 2530px);
}
.search {
  display: flex;
  align-items: center;
  width: 688px;
  background: #f6f2f3;
  border-top: 1px solid #d2bfc6;
  padding-left: 18px;
  color: #2b2b2b;
  font-size: 28px;
  font-weight: 300;
}
.search .fit {
  margin: -2px 0 0 17px;
}
.mic {
  margin-left: auto;
  margin-right: 30px;
}
.running {
  width: 96px;
  height: 80px;
  margin-left: 2px;
  padding: 16px 0 0 25px;
  background: #b00045;
  border-bottom: 4px solid #f89fc3;
}
.tray {
  display: flex;
  margin-left: auto;
}
.ime {
  font: 39px "Open Sans", sans-serif;
  fill: #fff;
  text-anchor: middle;
}
.clock {
  display: flex;
  flex-direction: column;
  align-items: center;
  width: 149px;
  color: #fff;
  font: 23px/37px "Open Sans", sans-serif;
  padding-top: 4px;
}
.peek {
  width: 10px;
  border-left: 2px solid #a9647d;
}
```
